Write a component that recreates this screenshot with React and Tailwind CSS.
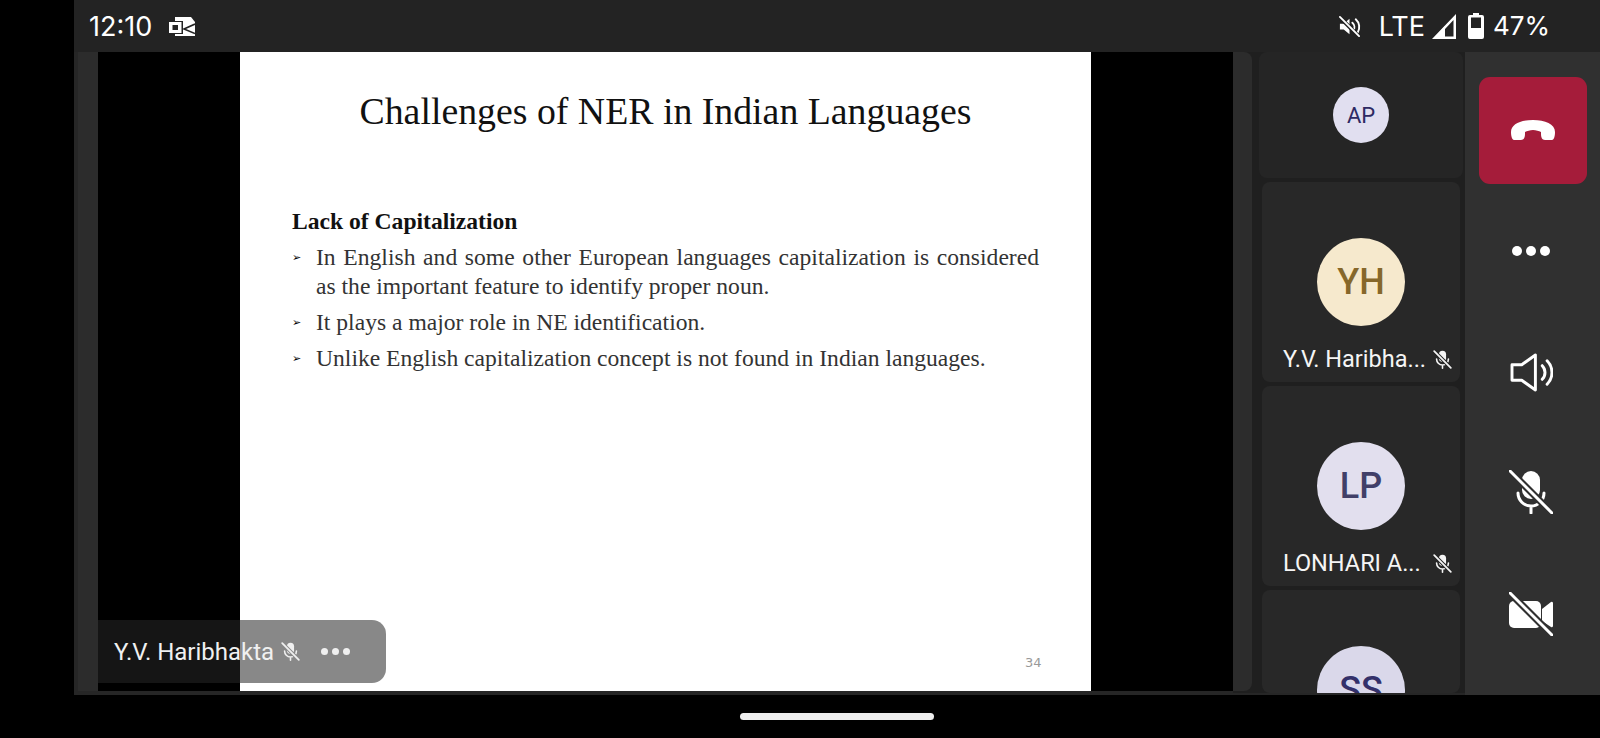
const MutedMic = ({ className, cut = "#282828" }) => (
  <svg viewBox="0 0 24 24" className={className} fill="none" stroke="currentColor" strokeLinecap="round">
    <rect x="7.5" y="1" width="9" height="14" rx="4.5" fill="currentColor" stroke="none" />
    <path d="M4.5 11.5a7.5 7.5 0 0 0 15 0M12 19v4" strokeWidth="2" />
    <path d="M3 3l18 18" stroke={cut} strokeWidth="4.5" />
    <path d="M1.5 1.5l21 21" strokeWidth="2.2" />
  </svg>
);

function Tile({ initials, name, circle, text, clip }) {
  return (
    <div className={`${clip ? "flex-1" : "h-[200px]"} mx-[3px] rounded-lg bg-[#282828] flex flex-col items-center overflow-hidden shrink-0`}>
      <div className={`mt-[56px] w-[88px] h-[88px] rounded-full shrink-0 flex items-center justify-center text-[36px] font-medium ${circle} ${text}`}>
        {initials}
      </div>
      {!clip && (
        <div className="mt-[20px] w-full flex items-center justify-between pl-[21px] pr-[8px] text-[#f5f5f5] text-[23.5px] leading-[26px] whitespace-nowrap">
          <span>{name}</span>
          <MutedMic className="w-[19px] h-[19px]" />
        </div>
      )}
    </div>
  );
}

function Bullet({ children, justify }) {
  return (
    <div className="mt-[7px] flex">
      <span className="w-[24px] shrink-0 text-[11px] text-black">➢</span>
      <p className={justify ? "[text-align:justify] text-[#333]" : "text-[#333]"}>{children}</p>
    </div>
  );
}

function App() {
  return (
    <div className="h-[738px] w-[1600px] bg-black flex flex-col overflow-hidden font-['Roboto',sans-serif]">
      <div className="h-[695px] shrink-0 ml-[74px] bg-[#262626] flex flex-col">
        {/* status bar */}
        <div className="h-[52px] shrink-0 bg-[#232323] flex items-center justify-between pl-[15px] pr-[50px] text-white">
          <div className="flex items-center gap-[17px]">
            <span className="text-[27px] leading-none font-['Inter',sans-serif]">12:10</span>
            <svg viewBox="0 0 26 20" className="w-[26px] h-[20px]" fill="#fff">
              <path d="M6 1h16l4 5v14H6z" />
              <path d="M26 8l-11 5 11 4.5" fill="none" stroke="#232323" strokeWidth="1.6" />
              <rect x="0" y="5" width="14" height="13" fill="#232323" />
              <path d="M0 6h12.5v11H0zM3.5 9v5H9V9z" fillRule="evenodd" />
            </svg>
          </div>
          <div className="flex items-center">
            <svg viewBox="0 0 24 24" className="w-[23px] h-[23px] mr-[18px]" fill="none" stroke="#fff" strokeWidth="2" strokeLinecap="round">
              <path d="M2 9h4l6-5v16l-6-5H2z" fill="#fff" stroke="none" />
              <path d="M15 8a6 6 0 0 1 1 8M18.5 4.5a11 11 0 0 1 2 14" />
              <path d="M1 1.5l21 21" stroke="#232323" strokeWidth="4" />
              <path d="M2 2l20 20" />
            </svg>
            <span className="text-[27px] leading-none font-['Inter',sans-serif] mr-[7px]">LTE</span>
            <svg viewBox="0 0 24 25" className="w-[24px] h-[25px] mr-[12px]">
              <path d="M24 0v25H0zM21.5 6L6 22.5h15.5z" fill="#fff" fillRule="evenodd" />
              <path d="M2 24L13 12v12z" fill="#fff" />
            </svg>
            <svg viewBox="0 0 16 26" className="w-[16px] h-[26px] mr-[9px]">
              <path d="M5 0h6v2h3a2 2 0 0 1 2 2v20a2 2 0 0 1-2 2H2a2 2 0 0 1-2-2V4a2 2 0 0 1 2-2h3z" fill="#fff" />
              <rect x="3" y="4.5" width="10" height="10.5" fill="#232323" />
            </svg>
            <span className="text-[26px] leading-none font-['Inter',sans-serif]">47%</span>
          </div>
        </div>

        <div className="flex-1 flex min-h-0">
          {/* main stage */}
          <div className="w-[1159px] shrink-0 h-[639px] relative flex">
            <div className="w-[4px] shrink-0" />
            <div className="w-[20px] shrink-0 bg-[#2c2c2c]" />
            <div className="w-[1135px] shrink-0 bg-black flex justify-center">
              <div className="w-[851px] h-full bg-white font-['Liberation_Serif',serif] text-[#1c1c1c] flex flex-col relative">
                <h1 className="mt-[37px] text-center text-[37.8px] leading-[44px] text-[#111]">Challenges of NER in Indian Languages</h1>
                <div className="mt-[74px] pl-[52px] pr-[52px] text-[23.6px] leading-[29px]">
                  <div className="font-bold text-[#111]">Lack of Capitalization</div>
                  <Bullet justify>In English and some other European languages capitalization is considered as the important feature to identify proper noun.</Bullet>
                  <Bullet>It plays a major role in NE identification.</Bullet>
                  <Bullet>Unlike English capitalization concept is not found in Indian languages.</Bullet>
                </div>
                <span className="absolute left-[785px] top-[601px] text-[13px] text-[#999] font-['DejaVu_Sans',sans-serif]">34</span>
              </div>
            </div>
            {/* presenter label */}
            <div className="absolute left-[24px] top-[568px] w-[288px] h-[63px] rounded-r-[14px] bg-[#262626]/55 text-[#f0f0f0] flex items-center pl-[16px]">
              <span className="text-[24px] leading-none whitespace-nowrap">Y.V. Haribhakta</span>
              <MutedMic className="w-[19px] h-[19px] ml-[7px] shrink-0" cut="#8c8c8c" />
              <span className="ml-[21px] flex gap-[4px]">
                <span className="w-[7px] h-[7px] rounded-full bg-[#f0f0f0]" />
                <span className="w-[7px] h-[7px] rounded-full bg-[#f0f0f0]" />
                <span className="w-[7px] h-[7px] rounded-full bg-[#f0f0f0]" />
              </span>
            </div>
          </div>

          {/* participants */}
          <div className="w-[232px] shrink-0 h-[641px] bg-[#1f1f1f] flex overflow-hidden">
            <div className="w-[19px] h-[639px] shrink-0 bg-[#2c2c2c] rounded-r-lg" />
            <div className="w-[204px] ml-[7px] shrink-0 flex flex-col gap-[4px] overflow-hidden">
              <div className="h-[126px] rounded-lg bg-[#252525] flex items-center justify-center shrink-0">
                <div className="w-[56px] h-[56px] rounded-full bg-[#e1dff0] text-[#2e2a63] text-[22px] flex items-center justify-center">AP</div>
              </div>
              <Tile initials="YH" name="Y.V. Haribha..." circle="bg-[#f6e9cd]" text="text-[#86672a]" />
              <Tile initials="LP" name="LONHARI A..." circle="bg-[#e2dfee]" text="text-[#413f68]" />
              <Tile initials="SS" circle="bg-[#dad8ea]" text="text-[#33306a]" clip />
            </div>
          </div>

          {/* call controls */}
          <div className="w-[135px] shrink-0 bg-[#303030] flex flex-col items-center text-white">
            <div className="mt-[25px] w-[108px] h-[107px] rounded-[11px] bg-[#a51c3a] flex items-center justify-center">
              <svg viewBox="0 0 44 20" className="w-[44px] h-[20px] -mt-[2px]" fill="#fff">
                <path d="M0 12C0 4 10 0 22 0s22 4 22 12c0 4-1 8-3 8h-7c-3 0-4-3-4-6v-2c-2-1-5-2-8-2s-6 1-8 2v2c0 3-1 6-4 6H3c-2 0-3-4-3-8z" />
              </svg>
            </div>
            <div className="mt-[62px] -ml-[3px] flex gap-[4px]">
              <span className="w-[10px] h-[10px] rounded-full bg-white" />
              <span className="w-[10px] h-[10px] rounded-full bg-white" />
              <span className="w-[10px] h-[10px] rounded-full bg-white" />
            </div>
            <svg viewBox="0 0 44 40" className="mt-[97px] -ml-[3px] w-[43px] h-[39px]" fill="none" stroke="#fff" strokeWidth="3" strokeLinecap="round" strokeLinejoin="round">
              <path d="M2 12h10L26 2v36L12 28H2z" />
              <path d="M33 13a10 10 0 0 1 0 14M38 8a17 17 0 0 1 0 24" />
            </svg>
            <svg viewBox="0 0 44 44" className="mt-[78px] -ml-[3px] w-[44px] h-[44px]" fill="none" stroke="#fff" strokeLinecap="round">
              <rect x="13" y="1" width="18" height="28" rx="9" fill="#fff" stroke="none" />
              <path d="M9 23a13 13 0 0 0 26 0M22 36v7" strokeWidth="3" />
              <path d="M2 2l40 40" stroke="#303030" strokeWidth="7" />
              <path d="M1 1l42 42" strokeWidth="3" />
            </svg>
            <svg viewBox="0 0 44 44" className="mt-[78px] -ml-[3px] w-[44px] h-[44px]" fill="none" stroke="#fff" strokeLinecap="round">
              <rect x="0" y="9" width="32" height="27" rx="5" fill="#fff" stroke="none" />
              <path d="M33 17l9-7a1.5 1.5 0 0 1 2 1v23a1.5 1.5 0 0 1-2 1l-9-6z" fill="#fff" stroke="none" />
              <path d="M2 2l40 40" stroke="#303030" strokeWidth="7" />
              <path d="M1 1l42 42" strokeWidth="3" />
            </svg>
          </div>
        </div>
      </div>
      {/* gesture bar */}
      <div className="mt-[18px] ml-[740px] w-[194px] h-[7px] rounded-full bg-[#eeeeee]" />
    </div>
  );
}

export default App;
